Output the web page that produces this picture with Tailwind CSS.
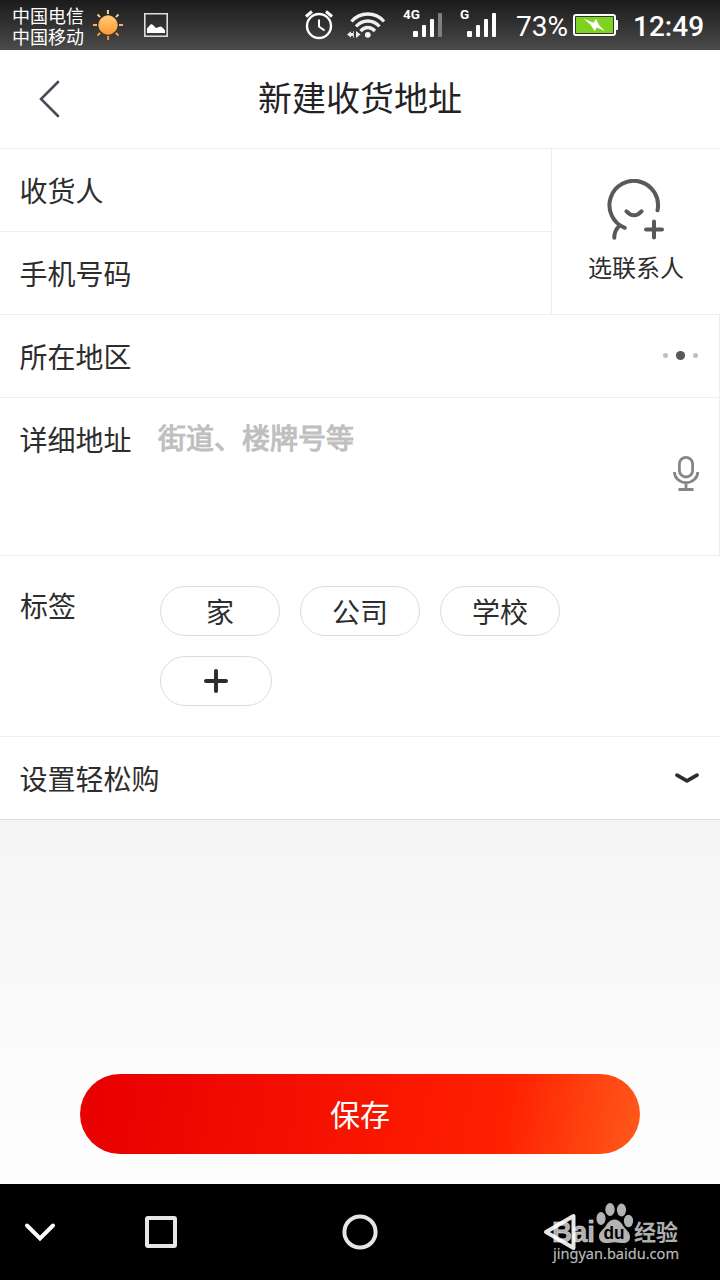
<!DOCTYPE html>
<html lang="zh-CN">
<head>
<meta charset="utf-8">
<title>新建收货地址</title>
<script src="https://cdn.jsdelivr.net/npm/@tailwindcss/browser@4"></script>
</head>
<body class="w-[720px] h-[1280px] overflow-hidden flex flex-col bg-white text-[28px] text-[#2e2d2d] font-['Noto_Sans_CJK_SC',sans-serif]">

<!-- Status bar -->
<header class="h-[50px] shrink-0 flex items-start bg-linear-to-b from-[#1b1b1b] to-[#4b4b4b] text-white">
  <div class="ml-3 mt-[5px] w-[72px] text-[18px] leading-[21px] whitespace-nowrap flex flex-col"><span>中国电信</span><span>中国移动</span></div>
  <svg class="ml-[9px] mt-[10px] shrink-0" width="30" height="30" viewBox="0 0 30 30">
    <defs><linearGradient id="sun" x1="0" y1="0" x2="0" y2="30" gradientUnits="userSpaceOnUse"><stop offset="0" stop-color="#ffd890"/><stop offset="1" stop-color="#ff8c1a"/></linearGradient></defs>
    <g stroke="url(#sun)" stroke-width="2" fill="url(#sun)"><circle cx="15" cy="15" r="9.200" stroke-width="1"/>
    <path d="M14.900 0v4M15.100 26v4M0 14.900h4M26 15.100h4M4.500 4.500l2.600 2.600M22.900 22.900l2.600 2.600M4.500 25.500l2.600-2.600M22.900 7.100l2.600-2.600"/></g>
  </svg>
  <svg class="ml-[21px] mt-[13px] shrink-0" width="24" height="24" viewBox="0 0 24 24"><path d="M.8.8h22.400v22.400H.8z" fill="none" stroke="#ddd" stroke-width="1.600"/><path d="M3 20v-4.500L7 11l2 1 3 3 3-1 2-.5 2 1.500 2 2.500v2.500z" fill="#fff"/></svg>
  <svg class="ml-[137px] mt-[10px] shrink-0" width="28" height="30" viewBox="0 0 28 30" fill="none" stroke="#fff"><circle cx="14" cy="16" r="12" stroke-width="2.400"/><path d="M1 6.500L7 1.500M27 6.500L21 1.500" stroke-width="3"/><path d="M14 9.500v7l5.500 4" stroke-width="2"/></svg>
  <svg class="ml-[14px] mt-[11px] shrink-0" width="39" height="28" viewBox="0 0 39 28" fill="none" stroke="#f0f0f0" stroke-width="3.300"><circle cx="20.800" cy="23.800" r="2.900" fill="#f4f4f4" stroke="none"/><path d="M4.500 10.500Q11 3 20.800 3T37 10.500"/><path d="M9 15.500Q14 10 20.800 10T32.500 15.500"/><path d="M13.500 20Q17 16.500 20.800 16.500T28 20"/><path d="M0 23.500l4-3.200V22h2v-1.700h.8v6.400H6V25H4v1.700zM13.500 23.500l-4.500-3.500v7z" fill="#eee" stroke="none"/></svg>
  <svg class="ml-[17px] mt-[5px] shrink-0" width="40" height="34" viewBox="0 0 40 34"><text x="0" y="14" font-family="Roboto,sans-serif" font-weight="700" font-size="13.500" fill="#fff">4G</text><g fill="#fff"><rect x="10" y="26" width="5" height="6" rx="1"/><rect x="19" y="20" width="4" height="12" rx="1"/><rect x="27" y="14" width="4" height="18" rx="1"/><rect x="35" y="8" width="4" height="24" rx="1" fill="#808080"/></g></svg>
  <svg class="ml-[17px] mt-[5px] shrink-0" width="38" height="34" viewBox="0 0 38 34"><text x="0" y="14" font-family="Roboto,sans-serif" font-weight="700" font-size="13.500" fill="#fff">G</text><g fill="#fff"><rect x="7" y="26" width="5" height="6" rx="1"/><rect x="16" y="20" width="4" height="12" rx="1"/><rect x="24" y="14" width="4" height="18" rx="1"/><rect x="32" y="8" width="4" height="24" rx="1"/></g></svg>
  <div class="ml-[18px] mt-[10px] w-[57px] leading-[33px] text-[28px] font-['Roboto',sans-serif]">73%</div>
  <svg class="mt-[14px] shrink-0" width="45" height="22" viewBox="0 0 45 22"><rect x="1" y="1" width="41" height="20" rx="2" fill="#333" stroke="#fff" stroke-width="2"/><path d="M42 6h2q1 0 1 1v8q0 1-1 1h-2z" fill="#fff"/><rect x="3" y="3" width="37" height="16" fill="#7ed321"/><path d="M10.700 4.700L20.500 8.800 23 4.700 26 11 32 17 23.800 13.500 21.800 17 17.500 10.700z" fill="#fff"/></svg>
  <div class="ml-[15px] mt-[10px] leading-[33px] text-[28px] font-medium font-['Roboto',sans-serif]">12:49</div>
</header>

<!-- Title bar -->
<div class="h-[99px] shrink-0 border-b border-[#eee] grid grid-cols-[160px_1fr_160px] items-center">
  <svg class="ml-[38px]" width="24" height="38" viewBox="0 0 24 38" fill="none" stroke="#484c58" stroke-width="2.600" stroke-linecap="round"><path d="M20 2L3 19l17 17"/></svg>
  <h1 class="text-center text-[34px] leading-[48px] text-[#232326] pb-[4px]">新建收货地址</h1>
</div>

<!-- Contact fields -->
<section class="h-[166px] shrink-0 flex border-b border-[#eee]">
  <div class="w-[552px] border-r border-[#eee] flex flex-col">
    <label class="h-[83px] border-b border-[#eee] flex items-center pl-[19.500px]">收货人</label>
    <label class="h-[82px] flex items-center pl-[19.500px]">手机号码</label>
  </div>
  <div class="flex-1 flex flex-col items-center pt-[30px]">
    <svg width="60" height="64" viewBox="0 0 60 64" fill="none" stroke="#595959" stroke-width="4" stroke-linecap="round"><g transform="translate(0 .3)"><path d="M51.500 31A24.300 24.300 0 1 0 18.800 48.500M13.500 46.500Q8.300 51 8.300 58.500M20.500 32Q28 40 35.500 32M40 50.300h16M48 42.300v16"/></g></svg>
    <span class="text-[24px] leading-[36px] mt-[6px]">选联系人</span>
  </div>
</section>

<section class="h-[83px] shrink-0 flex items-center justify-between pl-[19.500px] pr-[19px] border-b border-r border-[#eee]">
  <span>所在地区</span>
  <svg class="-mt-px" width="38" height="12" viewBox="0 0 38 12"><circle cx="3.500" cy="5.500" r="2.500" fill="#bfbfbf"/><circle cx="18.500" cy="5.500" r="4.600" fill="#595959"/><circle cx="33.500" cy="5.500" r="2.500" fill="#bfbfbf"/></svg>
</section>

<section class="h-[158px] shrink-0 flex items-start pl-[19.500px] pr-[19px] border-b border-r border-[#eee]">
  <span class="mt-5 leading-[42px]">详细地址</span>
  <span class="ml-[26.500px] mt-[18px] leading-[42px] text-[#bfbfbf] [-webkit-text-stroke:1.1px_#bfbfbf]">街道、楼牌号等</span>
  <svg class="ml-auto mt-[58px]" width="28" height="36" viewBox="0 0 28 36" fill="none" stroke="#848689" stroke-width="2.800"><rect x="7.400" y="1.400" width="13.200" height="19.600" rx="6.600"/><path d="M2.400 16a11.700 10.600 0 0 0 23.400 0M14 27v6M6.500 33.500h15"/></svg>
</section>

<!-- Tags -->
<section class="h-[181px] shrink-0 flex items-start pl-5 border-b border-[#eee]">
  <span class="w-[140px] mt-[28px] leading-[42px]">标签</span>
  <div class="mt-[30px] flex flex-wrap gap-5">
    <button class="w-[120px] h-[50px] rounded-full border border-[#dcdcdc] leading-[48px] text-center">家</button>
    <button class="w-[120px] h-[50px] rounded-full border border-[#dcdcdc] leading-[48px] text-center">公司</button>
    <button class="w-[120px] h-[50px] rounded-full border border-[#dcdcdc] leading-[48px] text-center">学校</button>
    <div class="w-full"><button class="w-[112px] h-[50px] rounded-full border border-[#dcdcdc] flex items-center justify-center"><svg width="24" height="24" viewBox="0 0 24 24" stroke="#2e2d2d" stroke-width="4" stroke-linecap="round"><path d="M2 12h20M12 2v20"/></svg></button></div>
  </div>
</section>

<section class="h-[83px] shrink-0 flex items-center justify-between pl-[19.500px] pr-5 border-b border-[#ddd]">
  <span>设置轻松购</span>
  <svg class="-mt-px" width="26" height="12" viewBox="0 0 26 12" fill="none" stroke="#2e2d2d" stroke-width="3.800" stroke-linecap="round" stroke-linejoin="round"><path d="M3 3.200l10 5.600 10-5.600"/></svg>
</section>

<!-- Save -->
<main class="h-[364px] shrink-0 flex items-end justify-center pb-[30px] bg-linear-to-b from-[#f5f5f5] to-[#fefefe]">
  <button class="w-[560px] h-20 rounded-full text-white text-[30px] leading-[78px] pb-[2px] bg-[linear-gradient(100deg,#e90000_4%,#ff2000_75%,#ff5519_98%)]">保存</button>
</main>

<!-- Navigation bar -->
<nav class="relative h-24 shrink-0 bg-black flex items-center">
  <svg class="ml-6" width="32" height="20" viewBox="0 0 32 20" fill="none" stroke="#fff" stroke-width="4" stroke-linecap="round"><path d="M3 3.500l13 13 13-13"/></svg>
  <svg class="ml-[89px]" width="32" height="32" viewBox="0 0 32 32"><rect x="2" y="2" width="28" height="28" rx="1" fill="none" stroke="#e6e6e6" stroke-width="4"/></svg>
  <svg class="ml-[165px]" width="36" height="36" viewBox="0 0 36 36"><circle cx="18" cy="18" r="15.600" fill="none" stroke="#e6e6e6" stroke-width="4"/></svg>
  <svg class="ml-[165px]" width="34" height="38" viewBox="0 0 34 38"><path d="M3 19L30.500 3v32z" fill="none" stroke="#e6e6e6" stroke-width="4" stroke-linejoin="round"/></svg>
  <!-- Watermark -->
  <svg class="absolute left-[548px] top-[16px]" width="136" height="66" viewBox="0 0 136 66">
    <g fill="#fff" fill-opacity=".7">
      <text x="4" y="42" font-family="Liberation Sans,sans-serif" font-weight="700" font-size="29" textLength="43" lengthAdjust="spacingAndGlyphs" stroke="#fff" stroke-opacity=".5" stroke-width=".8">Bai</text>
      <ellipse cx="53" cy="18.500" rx="4.600" ry="6.500"/><ellipse cx="62" cy="9.500" rx="4.700" ry="6.500"/><ellipse cx="73.500" cy="10" rx="4.600" ry="6.500"/><ellipse cx="80.500" cy="21" rx="4.600" ry="6.200"/>
      <path d="M66.500 19.500c5 0 7 4 9.500 7.500s6 5 6 10c0 4-3 6-6.500 6-4 0-6-.8-9-.8s-5 .8-9 .8c-4 0-6.500-3-6.500-6.500 0-4.500 3.500-6 6-9.500s4.500-7.500 9.500-7.500z"/>
      <text x="86" y="40" font-family="Noto Sans CJK SC,sans-serif" font-weight="700" font-size="22" textLength="44" lengthAdjust="spacingAndGlyphs">经验</text>
      <text x="5" y="59" font-family="Noto Sans,sans-serif" font-size="15" textLength="126" lengthAdjust="spacingAndGlyphs" stroke="#fff" stroke-opacity=".4" stroke-width=".3">jingyan.baidu.com</text>
    </g>
    <text x="55.500" y="38.500" font-family="Liberation Sans,sans-serif" font-weight="700" font-size="18" textLength="21" lengthAdjust="spacingAndGlyphs" fill="#000">du</text>
  </svg>
</nav>
</body>
</html>
